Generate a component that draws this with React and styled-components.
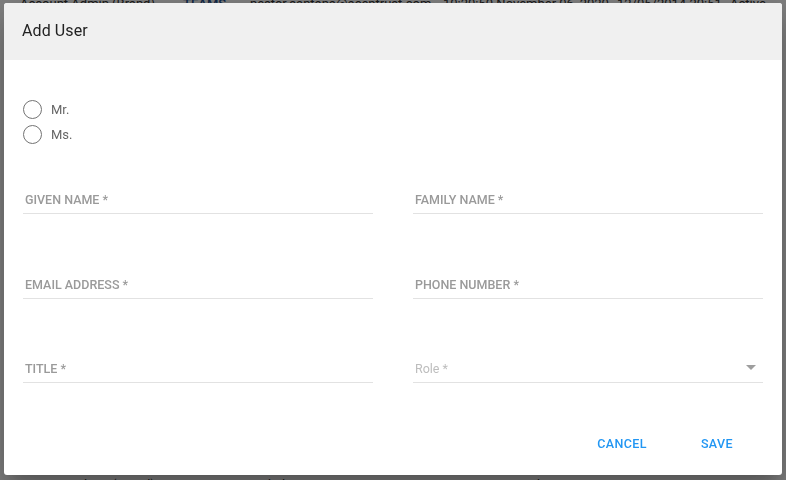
import React from 'react'
import styled, { createGlobalStyle } from 'styled-components'

const GlobalStyle = createGlobalStyle`
  html, body {
    margin: 0;
    padding: 0;
    background: #ffffff;
    font-family: Roboto, "Liberation Sans", Arial, sans-serif;
    overflow: hidden;
  }
  * { box-sizing: border-box; }
`

// only the first and last rows of the table peek out around the dialog
const rows = [
  ['Account Admin (Brand)', 'TEAMS', 'nestor.santana@acentrust.com', '10:20:50 November 06, 2020', '12/05/2014 20:51', 'Active'],
  ['Account Admin (Brand)', 'TEAMS', 'rachel.ng@acentrust.com', '10:24:16 December 23, 2020', '1594173018', 'Active'],
]

function App() {
  return (
    <>
      <GlobalStyle />
      <Page>
        {rows.map((r, i) => (
          <TableRow key={i}>
            <Cell>{r[0]}</Cell>
            <Cell link>{r[1]}</Cell>
            <Cell>{r[2]}</Cell>
            <Cell>{r[3]}</Cell>
            <Cell>{r[4]}</Cell>
            <Cell>{r[5]}</Cell>
          </TableRow>
        ))}
      </Page>
      <Backdrop>
        <Dialog>
          <Header>
            <Title>Add User</Title>
          </Header>
          <Body>
            <RadioGroup>
              <RadioItem>
                <RadioCircle />
                <RadioLabel>Mr.</RadioLabel>
              </RadioItem>
              <RadioItem>
                <RadioCircle />
                <RadioLabel>Ms.</RadioLabel>
              </RadioItem>
            </RadioGroup>
            <FieldGrid>
              <Field><Label>Given Name *</Label></Field>
              <Field><Label>Family Name *</Label></Field>
              <Field><Label>Email Address *</Label></Field>
              <Field><Label>Phone Number *</Label></Field>
              <Field><Label>Title *</Label></Field>
              <Field>
                <Placeholder>Role *</Placeholder>
                <Arrow viewBox="0 0 10 5">
                  <path d="M0 0 L10 0 L5 5 Z" fill="#9e9e9e" />
                </Arrow>
              </Field>
            </FieldGrid>
            <Actions>
              <TextButton>Cancel</TextButton>
              <TextButton>Save</TextButton>
            </Actions>
          </Body>
        </Dialog>
      </Backdrop>
    </>
  )
}

export default App

const Page = styled.div`
  margin-top: -21px;
  height: calc(100vh + 49px);
  display: flex;
  flex-direction: column;
  justify-content: space-between;
`
const TableRow = styled.div`
  height: 48px;
  display: grid;
  grid-template-columns: 163px 67px 193px 174px 113px 40px;
  align-items: center;
  padding-left: 20px;
  font-size: 13px;
  color: #333;
`
const Cell = styled.div`
  white-space: nowrap;
  overflow: hidden;
  color: ${p => (p.link ? '#1e4e8c' : '#333')};
  font-weight: ${p => (p.link ? 500 : 400)};
`
const Backdrop = styled.div`
  position: fixed;
  inset: 0;
  background: rgba(0, 0, 0, 0.5);
  display: flex;
  align-items: flex-start;
  justify-content: center;
  padding-top: 3px;
`
const Dialog = styled.div`
  width: 778px;
  height: 472px;
  background: #fff;
  border-radius: 3px;
  overflow: hidden;
  display: flex;
  flex-direction: column;
  box-shadow: 0 11px 15px -7px rgba(0,0,0,0.2), 0 24px 38px 3px rgba(0,0,0,0.14), 0 9px 46px 8px rgba(0,0,0,0.12);
`
const Header = styled.div`
  height: 57px;
  background: #f0f0f0;
  display: flex;
  align-items: center;
  padding: 0 18px 2px 18px;
`
const Title = styled.h2`
  margin: 0;
  font-size: 16px;
  font-weight: 400;
  color: #222;
  letter-spacing: 0.1px;
`
const Body = styled.div`
  flex: 1;
  display: flex;
  flex-direction: column;
  padding: 37px 19px 0 19px;
`
const RadioGroup = styled.div`
  display: flex;
  flex-direction: column;
`
const RadioItem = styled.label`
  height: 25px;
  display: flex;
  align-items: center;
  gap: 9px;
`
const RadioCircle = styled.span`
  width: 19px;
  height: 19px;
  border-radius: 50%;
  border: 1.5px solid #737373;
`
const RadioLabel = styled.span`
  font-size: 13px;
  color: #666;
`
const FieldGrid = styled.div`
  margin-top: 35px;
  display: grid;
  grid-template-columns: 1fr 1fr;
  column-gap: 40px;
  row-gap: 52.5px;
`
const Field = styled.div`
  height: 32px;
  display: flex;
  align-items: flex-end;
  justify-content: space-between;
  padding: 0 2px 5px 2px;
  border-bottom: 1px solid #e2e2e2;
`
const Label = styled.span`
  font-size: 12.5px;
  line-height: 16px;
  font-weight: 500;
  text-transform: uppercase;
  color: #9a9a9a;
`
const Placeholder = styled.span`
  font-size: 12.5px;
  line-height: 16px;
  color: #bdbdbd;
`
const Arrow = styled.svg`
  width: 10px;
  height: 5px;
  margin: 0 5px 7px 0;
`
const Actions = styled.div`
  margin-top: 42px;
  display: flex;
  justify-content: flex-end;
  gap: 22px;
  padding-right: 14px;
`
const TextButton = styled.button`
  background: none;
  border: none;
  height: 36px;
  padding: 0 16px;
  font-family: Roboto, "Liberation Sans", Arial, sans-serif;
  font-size: 12.5px;
  font-weight: 500;
  text-transform: uppercase;
  letter-spacing: 0.4px;
  color: #2196f3;
  cursor: pointer;
`
